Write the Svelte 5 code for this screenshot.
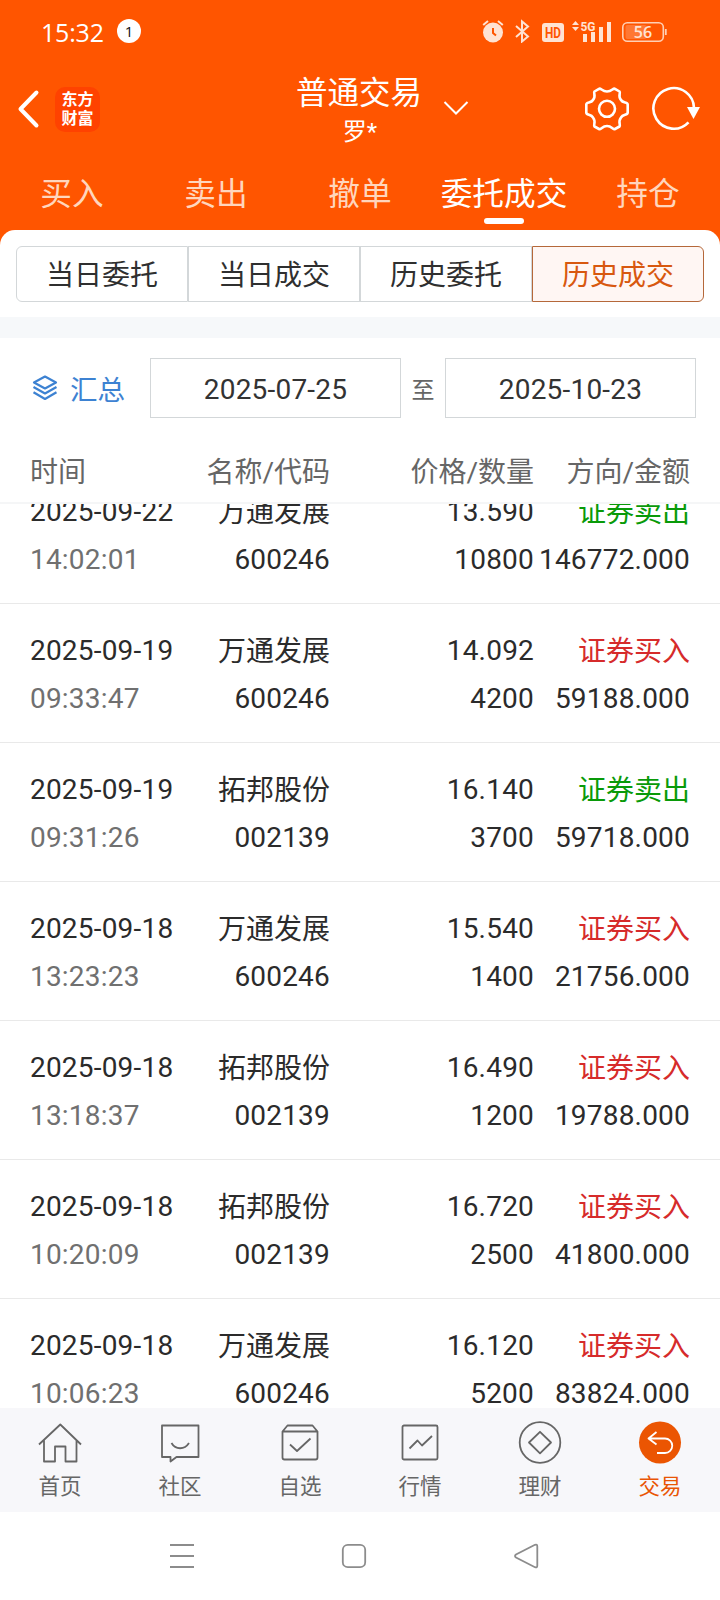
<script>
	const tabs = ['买入', '卖出', '撤单', '委托成交', '持仓'];
	const segments = ['当日委托', '当日成交', '历史委托', '历史成交'];
	const navItems = [
		{ id: 'home', label: '首页' },
		{ id: 'community', label: '社区' },
		{ id: 'watchlist', label: '自选' },
		{ id: 'market', label: '行情' },
		{ id: 'finance', label: '理财' },
		{ id: 'trade', label: '交易' }
	];

	let activeTab = '委托成交';
	let activeSegment = '历史成交';
	let activeNav = 'trade';
	let startDate = '2025-07-25';
	let endDate = '2025-10-23';

	let deals = [
		{ date: '2025-09-22', time: '14:02:01', name: '万通发展', code: '600246', price: '13.590', qty: '10800', side: 'sell', amount: '146772.000' },
		{ date: '2025-09-19', time: '09:33:47', name: '万通发展', code: '600246', price: '14.092', qty: '4200', side: 'buy', amount: '59188.000' },
		{ date: '2025-09-19', time: '09:31:26', name: '拓邦股份', code: '002139', price: '16.140', qty: '3700', side: 'sell', amount: '59718.000' },
		{ date: '2025-09-18', time: '13:23:23', name: '万通发展', code: '600246', price: '15.540', qty: '1400', side: 'buy', amount: '21756.000' },
		{ date: '2025-09-18', time: '13:18:37', name: '拓邦股份', code: '002139', price: '16.490', qty: '1200', side: 'buy', amount: '19788.000' },
		{ date: '2025-09-18', time: '10:20:09', name: '拓邦股份', code: '002139', price: '16.720', qty: '2500', side: 'buy', amount: '41800.000' },
		{ date: '2025-09-18', time: '10:06:23', name: '万通发展', code: '600246', price: '16.120', qty: '5200', side: 'buy', amount: '83824.000' }
	];
</script>

<div class="screen">
	<header>
		<div class="status-bar">
			<span class="clock">15:32</span>
			<span class="notice">1</span>
			<div class="status-icons">
				<svg width="24" height="24" viewBox="0 0 24 24">
					<circle cx="11" cy="13.500" r="10" fill="#ffe3d3" />
					<path d="M1.200 6 6 2M16 2l4.800 4" stroke="#ffe3d3" stroke-width="2" fill="none" />
					<path d="M11 9v5l3 2.500" stroke="#ff5500" stroke-width="2" fill="none" />
				</svg>
				<svg width="20" height="24" viewBox="0 0 20 24">
					<path d="M2 7 14 17.500l-6 5V2.500l6 5L2 18" stroke="#ffe3d3" stroke-width="2" fill="none" />
				</svg>
				<svg width="22" height="24" viewBox="0 0 22 24">
					<rect x="0" y="4" width="22" height="19" rx="3" fill="#ffe3d3" />
					<text x="3" y="18.500" class="hd" textLength="16" lengthAdjust="spacingAndGlyphs">HD</text>
				</svg>
				<svg width="42" height="24" viewBox="0 0 42 24">
					<path d="m0 6 3.500-4L7 6zM0 8l3.500 4L7 8z" fill="#ffe3d3" />
					<text x="8.500" y="11.500" class="net" textLength="15" lengthAdjust="spacingAndGlyphs">5G</text>
					<path d="M11 15h4v8h-4zM19 13h4v10h-4zM27 8h4v15h-4zM35 3h4v20h-4z" fill="#ffe3d3" />
				</svg>
				<svg width="46" height="24" viewBox="0 0 46 24">
					<rect x="3.500" y="6" width="21" height="14" rx="2" fill="#ff7733" />
					<rect x=".8" y="3.800" width="40.500" height="18.500" rx="4.500" fill="none" stroke="#ffd0b5" stroke-width="1.600" />
					<path d="M43.800 10v6" stroke="#ffd0b5" stroke-width="1.800" />
					<text x="21" y="18.500" text-anchor="middle" class="level">56</text>
				</svg>
			</div>
		</div>

		<div class="title-bar">
			<div class="left">
				<svg width="24" height="40" viewBox="0 0 24 40">
					<path d="M20.500 3.500 4.500 20 20.500 36.500" fill="none" stroke="#fff" stroke-width="4" stroke-linecap="round" stroke-linejoin="round" />
				</svg>
				<div class="logo"><span>东方</span><span>财富</span></div>
			</div>
			<div class="title">
				<h1>普通交易</h1>
				<p>罗*</p>
			</div>
			<div class="right">
				<svg class="chevron" width="26" height="16" viewBox="0 0 26 16">
					<path d="m1.500 1 11.500 11.500L24.500 1" fill="none" stroke="#fff" stroke-width="2" />
				</svg>
				<svg class="gear" width="46" height="46" viewBox="0 0 46 46" fill="none" stroke="#fff" stroke-width="2.600" stroke-linejoin="round">
					<path d="M15 2.800 C17 1.800 18 5.500 23 5.500 S29 1.800 31 2.800 L35.500 5.500 C37 7 33.500 9.500 37 14 C39 17.500 43.700 15.500 43.700 18.500 V26.500 C43.700 29.500 39 28 37 31.500 C33.500 36 37 39 35.500 40.500 L31 43 C29 44 28 40 23 40 S17 44 15 43 L10.500 40.500 C9 39 12.500 36 9 31.500 C7 28 2.300 29.500 2.300 26.500 V18.500 C2.300 15.500 7 17.500 9 14 C12.500 9.500 9 7 10.500 5.500 Z" />
					<circle cx="23" cy="22.800" r="8" />
				</svg>
				<svg width="50" height="46" viewBox="0 0 50 46">
					<path d="M37.500 36.300A20.300 20.300 0 1 1 43 22" fill="none" stroke="#fff" stroke-width="2.600" />
					<path d="M36 21h13l-6.500 12z" fill="#fff" />
				</svg>
			</div>
		</div>

		<nav class="tabs">
			{#each tabs as tab}
				<button class:active={tab === activeTab} on:click={() => (activeTab = tab)}>{tab}</button>
			{/each}
		</nav>

		<div class="sheet">
			<div class="segments">
				{#each segments as segment}
					<button class:active={segment === activeSegment} on:click={() => (activeSegment = segment)}>{segment}</button>
				{/each}
			</div>
		</div>
	</header>

	<section class="filter">
		<div class="summary">
			<svg width="26" height="26" viewBox="0 0 26 26" fill="none" stroke="#3d82d2" stroke-width="2.200" stroke-linejoin="round">
				<path d="M13 1.500 24 7.500 13 13.500 2 7.500z" />
				<path d="m1.500 12 11.500 6.500L24.500 12M1.500 17.300 13 24l11.500-6.700" />
			</svg>
			<span>汇总</span>
		</div>
		<div class="date">{startDate}</div>
		<span class="to">至</span>
		<div class="date">{endDate}</div>
	</section>

	<div class="row head">
		<span>时间</span>
		<span>名称/代码</span>
		<span>价格/数量</span>
		<span>方向/金额</span>
	</div>

	<main>
		<div class="list">
			{#each deals as deal}
				<div class="row deal">
					<span>{deal.date}</span>
					<span class="name">{deal.name}</span>
					<span>{deal.price}</span>
					<span class="name {deal.side}">{deal.side === 'buy' ? '证券买入' : '证券卖出'}</span>
					<span class="time">{deal.time}</span>
					<span>{deal.code}</span>
					<span>{deal.qty}</span>
					<span>{deal.amount}</span>
				</div>
			{/each}
		</div>
	</main>

	<nav class="bottom-nav">
		{#each navItems as item}
			<button class:active={item.id === activeNav} on:click={() => (activeNav = item.id)}>
				<svg width="44" height="44" viewBox="0 0 44 44" fill="none" stroke="#666" stroke-width="1.800" stroke-linejoin="round">
					{#if item.id === 'home'}
						<path d="M1 23.500 22.300 3.500 43 23.500M6 19.500V40.500H17V25.500H27.500V40.500H38.500V19.500" />
					{:else if item.id === 'community'}
						<path d="M4 4.500H40.500V36H18.500L12.500 40.500V36H4z" />
						<path d="M13.500 22c4 7 13 7 17.500 0" />
					{:else if item.id === 'watchlist'}
						<path d="M4.500 10.500V36.500a2 2 0 0 0 2 2h31a2 2 0 0 0 2-2V10.500l-5-6H9.500zM4.500 10.500h35" />
						<path d="m12 23.500 7 6.500L32.500 17.500" />
					{:else if item.id === 'market'}
						<rect x="4.500" y="4.500" width="35" height="34" rx="1.500" />
						<path d="m11.500 27.500 8-8 4.500 5 10-9.500" />
					{:else if item.id === 'finance'}
						<circle cx="22" cy="21.500" r="20.300" />
						<path d="M22 10.800 33 21.500 22 32.300 11 21.500z" />
					{:else}
						<circle cx="22" cy="21.500" r="21" fill="#eb5502" stroke="none" />
						<path d="M18.500 11 10.500 17.500 18.500 23.500M11 17.500H27a7 7 0 0 1 0 14.500H19" stroke="#fff" />
					{/if}
				</svg>
				<span>{item.label}</span>
			</button>
		{/each}
	</nav>

	<footer>
		<svg width="26" height="26" viewBox="0 0 26 26">
			<path d="M1 2h24M1 13h24M1 24h24" stroke="#8c8c8c" stroke-width="2" />
		</svg>
		<svg width="26" height="26" viewBox="0 0 26 26">
			<rect x="1.800" y="1.800" width="22.400" height="22.400" rx="5" fill="none" stroke="#8c8c8c" stroke-width="1.800" />
		</svg>
		<svg width="26" height="26" viewBox="0 0 26 26">
			<path d="M22 1.800 3 11.500q-2 1.500 0 3L22 24.200q2.300.800 2.300-1.700V3.500q0-2.500-2.300-1.700z" fill="none" stroke="#8c8c8c" stroke-width="1.800" />
		</svg>
	</footer>
</div>

<style>
	:global(body) {
		background: #fff;
	}

	.screen {
		display: flex;
		flex-direction: column;
		width: 720px;
		height: 1600px;
		overflow: hidden;
		background: #fff;
		color: #2b2b2b;
		font-family: Roboto, "Noto Sans CJK SC", sans-serif;
		font-size: 28px;
	}

	button {
		padding: 0;
		border: none;
		background: none;
		font: inherit;
		color: inherit;
	}

	svg {
		display: block;
		flex: none;
	}

	header {
		background: #ff5500;
		color: #fff;
	}

	.status-bar {
		display: flex;
		align-items: center;
		height: 62px;
		padding: 0 52px 0 41px;
	}

	.clock {
		width: 76px;
		padding-top: 2px;
		font-family: "Open Sans", sans-serif;
		font-size: 25px;
		font-weight: 500;
		letter-spacing: -0.2px;
	}

	.notice {
		width: 24px;
		height: 24px;
		border-radius: 50%;
		background: #fff;
		color: #111;
		font-family: "Open Sans", sans-serif;
		font-size: 15px;
		line-height: 24px;
		text-align: center;
	}

	.status-icons {
		display: flex;
		gap: 8px;
		margin-left: auto;
	}

	.hd {
		font-size: 14px;
		font-weight: 700;
		fill: #ff5500;
	}

	.net {
		font-size: 13px;
		font-weight: 700;
		fill: #ffe3d3;
	}

	.level {
		font-family: "Open Sans", sans-serif;
		font-size: 16px;
		font-weight: 600;
		fill: #ffe3d3;
	}

	.title-bar {
		display: grid;
		grid-template-columns: 1fr 128px 1fr;
		align-items: center;
		height: 94px;
	}

	.left {
		display: flex;
		align-items: center;
		gap: 15px;
		padding-left: 16px;
	}

	.logo {
		display: flex;
		flex-direction: column;
		align-items: center;
		justify-content: center;
		width: 45px;
		height: 45px;
		border-radius: 10px;
		background: #ff4200;
		font-size: 16px;
		font-weight: 700;
		line-height: 19px;
	}

	.title {
		text-align: center;
	}

	h1 {
		margin: 1px 0 0 -2px;
		font-size: 31.500px;
		font-weight: 400;
		line-height: 44px;
		white-space: nowrap;
	}

	.title p {
		margin: 0;
		font-size: 24px;
		line-height: 32px;
	}

	.right {
		display: flex;
		align-items: center;
		padding: 0 19px 0 19px;
	}

	.gear {
		margin: 0 21px 0 auto;
	}

	.tabs {
		display: grid;
		grid-template-columns: repeat(5, 1fr);
		height: 74px;
	}

	.tabs button {
		display: flex;
		flex-direction: column;
		align-items: center;
		padding-top: 16px;
		color: #ffd6bd;
		font-size: 31.700px;
		line-height: 46px;
	}

	.tabs button.active {
		color: #fff;
	}

	.tabs button.active::after {
		content: '';
		width: 40px;
		height: 6px;
		border-radius: 3px;
		background: #fff;
	}

	.sheet {
		padding: 16px 16px 15px;
		border-radius: 15px 15px 0 0;
		background: #fff;
		color: #2f2f2f;
	}

	.segments {
		display: grid;
		grid-template-columns: repeat(4, 1fr);
	}

	.segments button {
		height: 56px;
		padding-top: 4px;
		border: 1px solid #d3d7d9;
		line-height: 50px;
	}

	.segments button:first-child {
		border-radius: 6px 0 0 6px;
	}

	.segments button:last-child {
		border-radius: 0 6px 6px 0;
	}

	.segments button.active {
		border-color: #b5683a;
		background: #fff6f3;
		color: #d8580f;
	}

	.filter {
		display: flex;
		align-items: center;
		height: 100px;
		padding: 0 24px 0 32px;
		border-top: 21px solid #f6f8fa;
	}

	.summary {
		display: flex;
		align-items: center;
		gap: 12px;
		width: 118px;
		color: #3d82d2;
		font-size: 27.500px;
	}

	.date {
		flex: 1;
		height: 58px;
		border: 1px solid #d3d7d9;
		color: #333;
		letter-spacing: 0.2px;
		line-height: 61px;
		text-align: center;
	}

	.to {
		width: 44px;
		color: #666;
		font-size: 23px;
		text-align: center;
	}

	.row {
		display: grid;
		grid-template-columns: 160px 140px 204px 156px;
		padding: 0 30px;
		letter-spacing: 0.2px;
		white-space: nowrap;
	}

	.row span {
		display: flex;
		justify-content: flex-end;
	}

	.row span:nth-child(4n + 1) {
		justify-content: flex-start;
	}

	.head {
		height: 64px;
		border-bottom: 2px solid #f5f6f7;
		color: #666;
		letter-spacing: 0;
		line-height: 70px;
	}

	main {
		flex: 1;
		min-height: 0;
		overflow: hidden;
	}

	/* scrolled part way into the first record */
	.list {
		margin-top: -39px;
	}

	.deal {
		padding-top: 23px;
		padding-bottom: 19px;
		border-bottom: 1px solid #e9e9e9;
		line-height: 48px;
	}

	.deal span {
		height: 48px;
	}

	.deal .name {
		letter-spacing: 0;
		line-height: 50px;
	}

	.time {
		color: #707070;
	}

	.buy {
		color: #d62b2b;
	}

	.sell {
		color: #099a09;
	}

	.bottom-nav {
		display: grid;
		flex: none;
		grid-template-columns: repeat(6, 1fr);
		height: 104px;
		background: #f7f7fa;
		color: #666;
	}

	.bottom-nav button {
		display: flex;
		flex-direction: column;
		align-items: center;
		padding-top: 13px;
		font-size: 21.500px;
		line-height: 44px;
	}

	.bottom-nav button.active {
		color: #e95504;
	}

	footer {
		display: flex;
		flex: none;
		align-items: center;
		justify-content: center;
		gap: 146px;
		height: 88px;
		padding-right: 12px;
	}
</style>
